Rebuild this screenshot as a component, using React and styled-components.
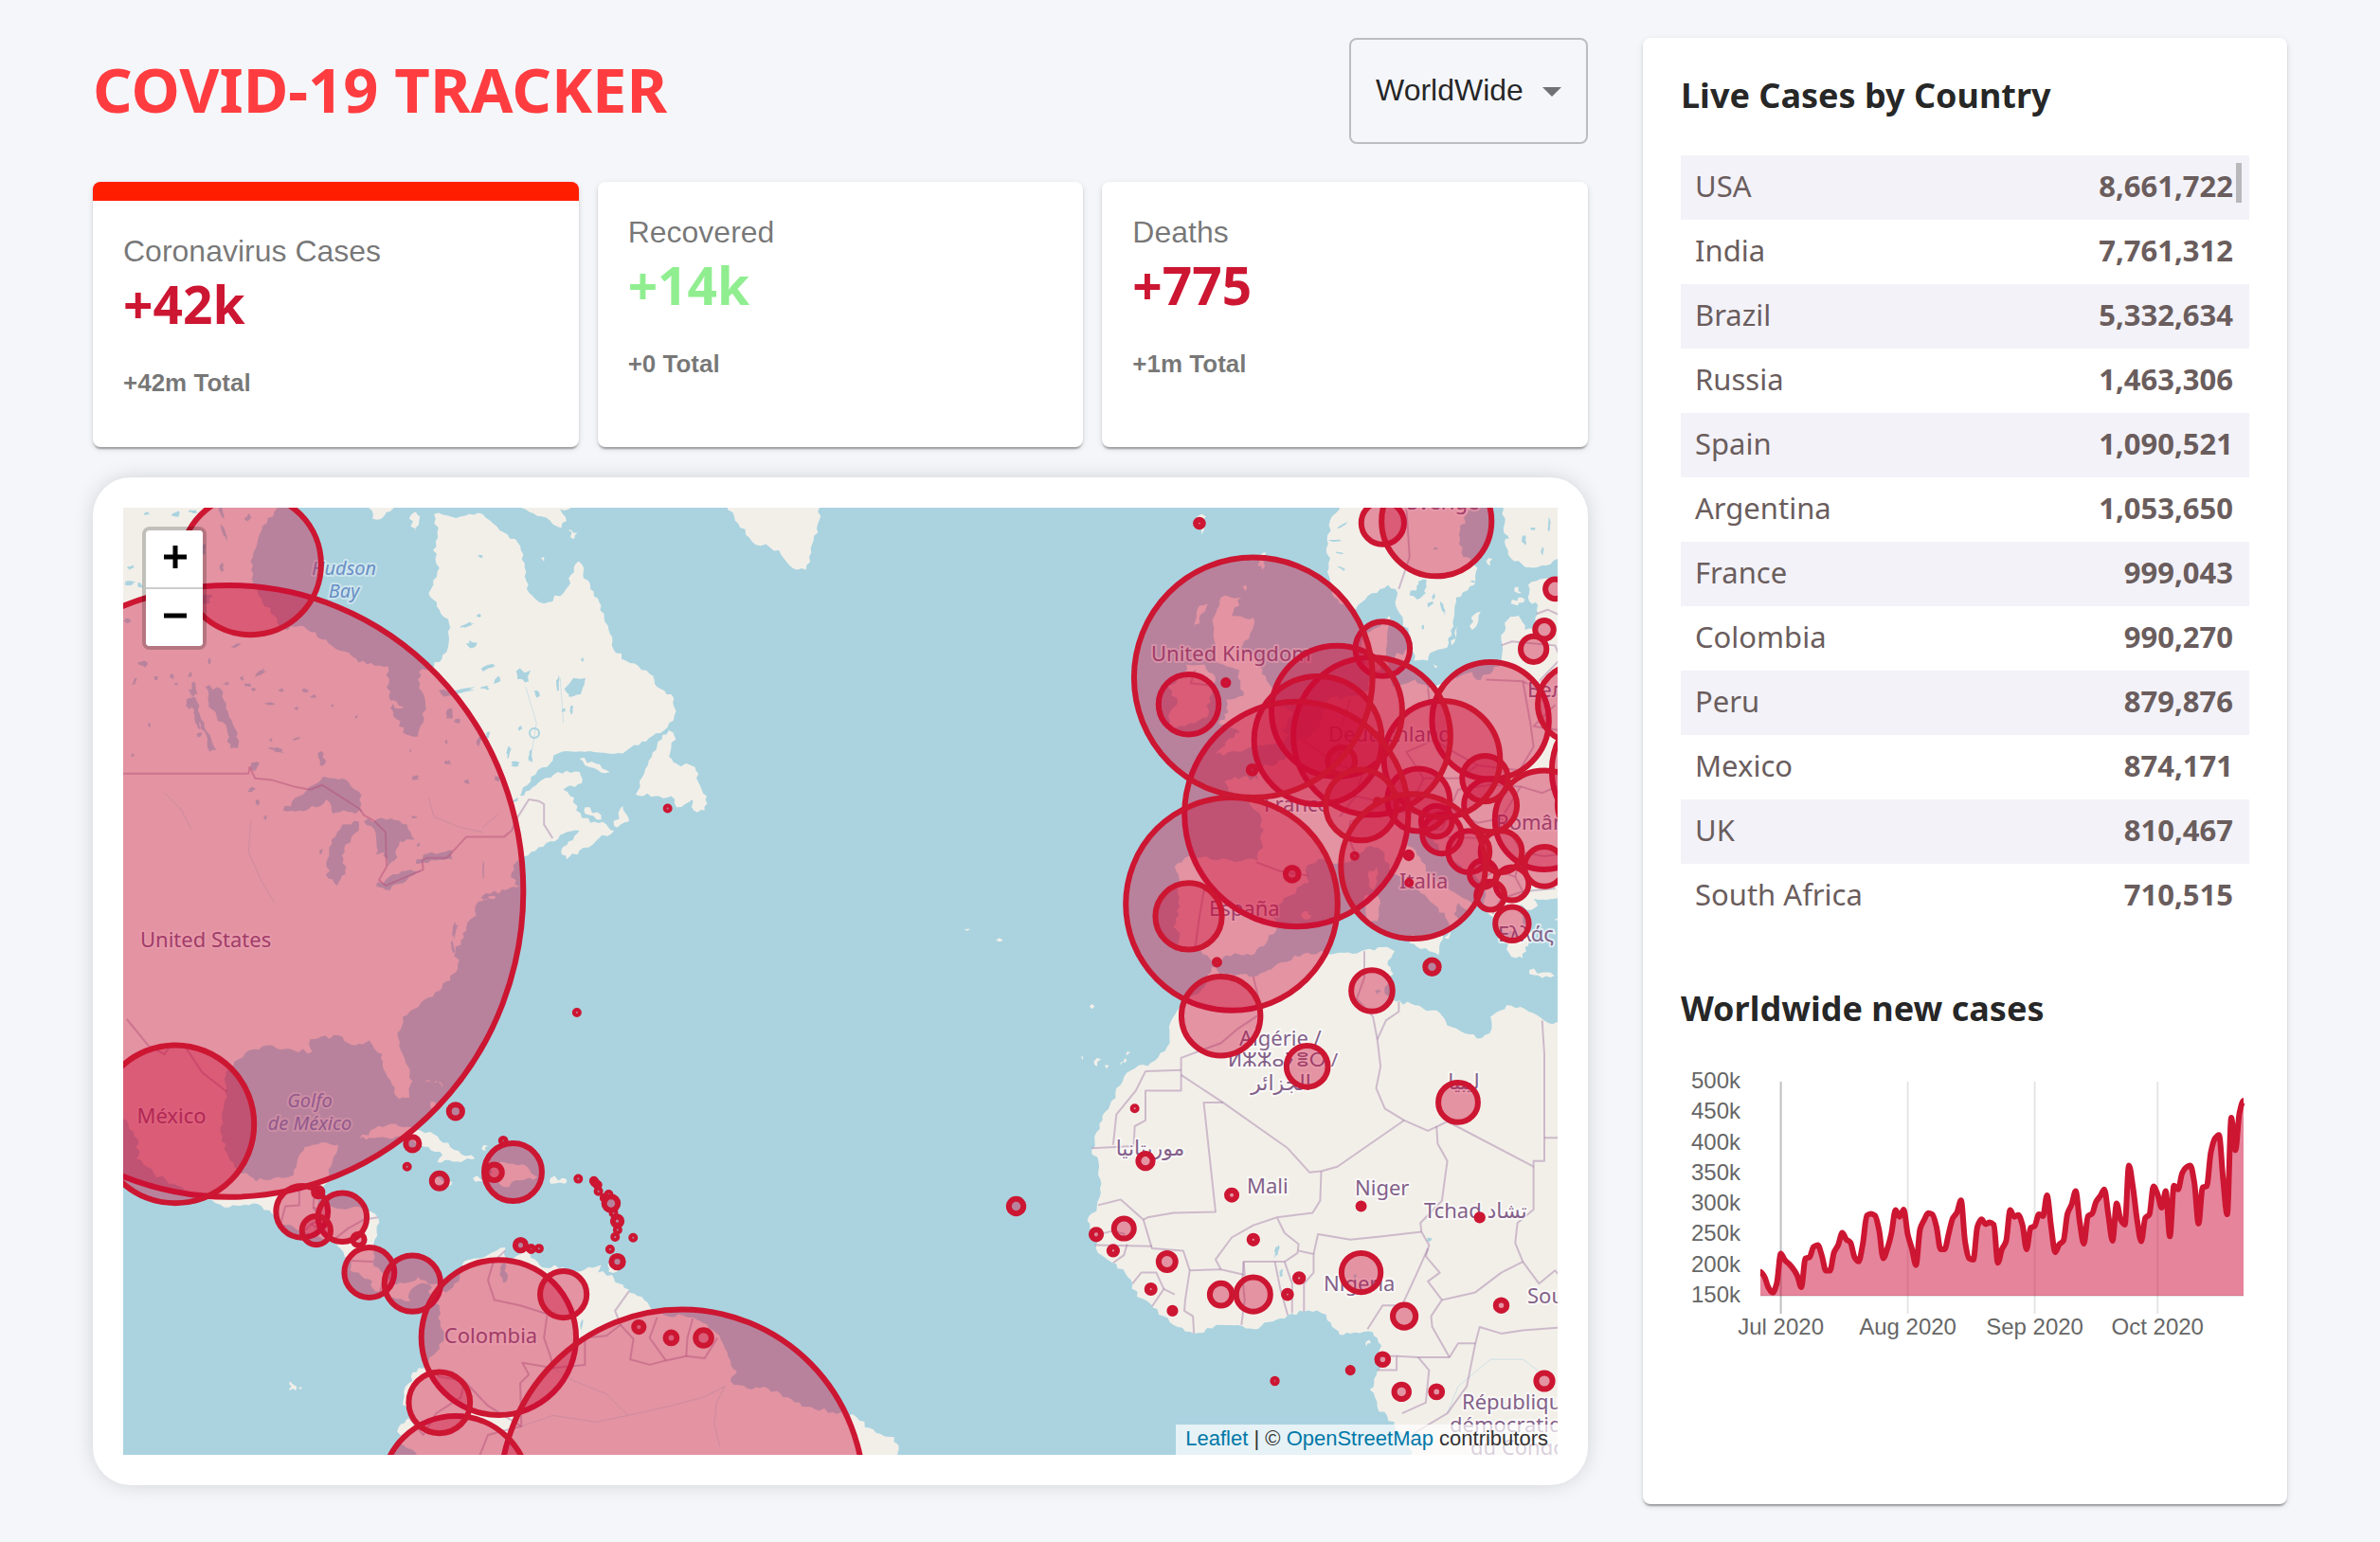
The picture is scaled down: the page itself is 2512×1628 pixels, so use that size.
import React from "react";
import styled, { createGlobalStyle, css } from "styled-components";

const ARIAL = `"Liberation Sans", Arial, sans-serif`;
const HUMANIST = `"Noto Sans", "DejaVu Sans", sans-serif`;
const CRIMSON = "#cc1632";
const CRIMSON_FILL = "#cd0a38";

const GlobalStyle = createGlobalStyle`
  * { box-sizing: border-box; }
  body { margin: 0; background: #f5f6fa; font-family: ${ARIAL}; }
`;

const paperShadow = css`
  box-shadow: 0 4px 2px -2px rgba(0, 0, 0, 0.2), 0 2px 2px rgba(0, 0, 0, 0.14),
    0 2px 6px rgba(0, 0, 0, 0.12);
`;

const Page = styled.div`
  display: grid;
  grid-template-columns: minmax(0, 1fr) 680px;
  align-items: start;
  gap: 58px;
  padding: 40px 98px;
`;
const Main = styled.main`
  display: flex;
  flex-direction: column;
`;
const Header = styled.header`
  display: flex;
  align-items: center;
  justify-content: space-between;
  margin-bottom: 40px;
`;
const Title = styled.h1`
  margin: 0;
  padding-bottom: 4px;
  font: 700 65px/80px ${HUMANIST};
  color: #ff3d40;
`;
const SelectBox = styled.label`
  position: relative;
  display: block;
`;
const CountrySelect = styled.select`
  appearance: none;
  display: block;
  width: 252px;
  height: 112px;
  padding: 0 60px 2px 26px;
  border: 2px solid rgba(0, 0, 0, 0.23);
  border-radius: 8px;
  background: transparent;
  font: 400 32px/38px ${ARIAL};
  color: rgba(0, 0, 0, 0.87);
`;
const SelectArrow = styled.svg`
  position: absolute;
  right: 14px;
  top: 32px;
  width: 48px;
  height: 48px;
  fill: rgba(0, 0, 0, 0.54);
  pointer-events: none;
`;

const Stats = styled.section`
  display: grid;
  grid-template-columns: repeat(3, minmax(0, 1fr));
  gap: 20px;
  margin-bottom: 32px;
`;
const StatCard = styled.article`
  min-height: 280px;
  padding: 32px;
  border-radius: 8px;
  background: #fff;
  color: rgba(0, 0, 0, 0.54);
  ${paperShadow}
  ${(p) => p.$active && "border-top: 20px solid #ff1e00;"}
`;
const StatLabel = styled.p`
  margin: 0;
  font-size: 32px;
  line-height: 42px;
`;
const StatValue = styled.h2`
  margin: 0 0 32px;
  font: 700 55px/70px ${HUMANIST};
  color: ${(p) => (p.$good ? "lightgreen" : CRIMSON)};
`;
const StatTotal = styled.p`
  margin: 0;
  font-size: 26px;
  font-weight: 700;
  line-height: 32px;
`;

const MapCard = styled.section`
  padding: 32px;
  border-radius: 40px;
  background: #fff;
  box-shadow: 0 0 24px -4px rgba(0, 0, 0, 0.2);
`;
const MapFrame = styled.div`
  position: relative;
  overflow: hidden;
  background: #aad3df;
`;
const MapCanvas = styled.svg`
  display: block;
  width: 100%;
  height: 1000px;
`;
const ZoomControl = styled.div`
  position: absolute;
  left: 20px;
  top: 20px;
  display: flex;
  flex-direction: column;
  border: 4px solid rgba(0, 0, 0, 0.2);
  border-radius: 8px;
  background: #ccc;
  background-clip: padding-box;
  gap: 2px;
`;
const ZoomButton = styled.button`
  display: grid;
  place-items: center;
  width: 60px;
  height: 60px;
  padding: 0 0 4px 2px;
  border: 0;
  border-radius: ${(p) => (p.$last ? "0 0 4px 4px" : "4px 4px 0 0")};
  background: #fff;
  svg { width: 24px; height: 24px; }
`;
const Attribution = styled.div`
  position: absolute;
  right: 0;
  bottom: 0;
  padding: 0 10px 2px;
  background: rgba(255, 255, 255, 0.7);
  font-size: 22px;
  line-height: 30px;
  color: #333;
  a { color: #0078a8; text-decoration: none; }
`;

const Panel = styled.aside`
  padding: 40px 40px 160px;
  border-radius: 8px;
  background: #fff;
  ${paperShadow}
`;
const PanelTitle = styled.h3`
  margin: 0 0 42px;
  font: 700 36px/42px ${HUMANIST};
  color: rgba(0, 0, 0, 0.87);
`;
const TableScroll = styled.div`
  position: relative;
  margin-bottom: 64px;
`;
const ScrollThumb = styled.span`
  position: absolute;
  top: 8px;
  right: 8px;
  width: 6px;
  height: 42px;
  background: #b9b8bb;
`;
const CasesTable = styled.table`
  width: 100%;
  border-collapse: collapse;
  font: 400 31px/36px ${HUMANIST};
  color: #6a5d5d;
  tr:nth-of-type(odd) { background: #f3f2f8; }
  th, td { padding: 14px 17px 18px 15px; text-align: left; font-weight: 400; }
  td { text-align: right; font-weight: 700; }
`;
const Chart = styled.svg`
  display: block;
  width: 100%;
  height: auto;
  overflow: visible;
  text { font: 400 24px ${ARIAL}; fill: #666; }
`;

/* ---------- map ---------- */

const RAD = Math.PI / 180;
const SCALE = 4096 / (2 * Math.PI);
const EARTH = 6371000;
const px = (lon) => 755 + (lon + 40.4796) * 11.3778;
const py = (lat) => 922 - SCALE * Math.log(Math.tan(Math.PI / 4 + (lat * RAD) / 2));
const unY = (y) => (2 * Math.atan(Math.exp((922 - y) / SCALE)) - Math.PI / 2) / RAD;

const trace = (s) =>
  s.trim().split(/\s+/).map((p, i) => {
    const [lon, lat] = p.split(",").map(Number);
    return `${i ? "L" : "M"}${px(lon).toFixed(1)} ${py(lat).toFixed(1)}`;
  }).join("");

const random = (start) => {
  let seed = start;
  return () => ((seed = (seed * 16807) % 2147483647) / 2147483647 - 0.5);
};

// Breaks every long segment into uneven steps, so that shores do not look ruled.
const shore = (s) => {
  const pts = s.trim().split(/\s+/).map((p) => p.split(",").map(Number)).map(([a, b]) => [px(a), py(b)]);
  const rnd = random(7);
  let d = "";
  pts.forEach(([x, y], i) => {
    const [u, v] = pts[(i + 1) % pts.length];
    d += `${i ? "L" : "M"}${x.toFixed(1)} ${y.toFixed(1)}`;
    const len = Math.hypot(u - x, v - y);
    const n = len > 400 ? 0 : Math.floor(len / 5);
    for (let k = 1; k <= n; k++) {
      const t = k / (n + 1);
      const o = rnd() * 5;
      d += `L${(x + (u - x) * t - ((v - y) / len) * o).toFixed(1)} ${(y + (v - y) * t + ((u - x) / len) * o).toFixed(1)}`;
    }
  });
  return d + "Z";
};

// A ragged pond: x, y, width, height and tilt in degrees.
const pond = ([x, y, w, h, tilt = 0], index) => {
  const rnd = random(index * 97 + 11);
  const a0 = tilt * RAD;
  return Array.from({ length: 11 }, (_, i) => {
    const a = (i / 11) * Math.PI * 2;
    const r = 0.5 + rnd() * 0.45;
    const ex = Math.cos(a) * w * r;
    const ey = Math.sin(a) * h * r;
    return `${i ? "L" : "M"}${(x + ex * Math.cos(a0) - ey * Math.sin(a0)).toFixed(1)} ${(y + ex * Math.sin(a0) + ey * Math.cos(a0)).toFixed(1)}`;
  }).join("") + "Z";
};

const LAND = [
  // the Americas
  "-115,66 -91,64 -92.3,62.8 -94,61.7 -94.8,60.5 -94.9,59.5 -94.3,58.7 -92.8,57.7 -92.4,57 -90.5,57.2 -88,56.5 -85,55.3 -82.3,55.1 -82.2,53.5 -81.5,52.2 -80.5,51.3 -79.5,51.2 -79,52 -78.8,53 -79.3,54.2 -79.4,54.8 -78,55.1 -77.2,55.7 -76.6,56.5 -76.6,57.3 -77.5,58 -78.5,58.8 -77.5,60 -78.1,60.8 -77.7,61.6 -78,62.4 -75.5,62.3 -73.5,62.4 -71.5,61.6 -70,61 -69.6,60 -69.4,59 -67.8,58.3 -66,58.8 -65,59.8 -64.6,60.3 -63.5,59 -62.5,58.2 -61.8,57 -61.5,56.2 -60.2,55.4 -58,54.7 -57.3,54 -56,53.6 -55.7,52.4 -57,51.4 -59,50.7 -60.5,50.2 -64,50.3 -66.5,50.2 -67.5,49.4 -69,48.8 -70,47.6 -71.2,46.8 -69.5,47.9 -68,48.6 -66.5,49.1 -64.5,49.1 -64.3,48.4 -66,48 -65,47.5 -64.8,46.7 -63.5,45.9 -62,45.8 -61.3,45.4 -63,44.7 -64.5,44.1 -65.7,43.5 -66.2,44.1 -65.5,44.7 -64.5,45.4 -66,45.2 -67.2,44.7 -69,44 -70.4,43.3 -70.8,42.6 -70.5,41.8 -70,41.7 -71.3,41.4 -73.5,41 -74,40.5 -74.1,39.6 -75,38.8 -75.5,37.8 -76,37 -75.8,36 -76.5,34.8 -77.9,33.9 -79.2,33.1 -80.9,32 -81.4,30.7 -80.9,29 -80.4,28 -80,26.8 -80.3,25.4 -81.2,25.3 -81.9,26.5 -82.7,27.8 -82.8,29 -84,30.1 -85.3,29.7 -86.5,30.4 -88.5,30.4 -89.5,30.2 -89.3,29.2 -91,29.3 -93,29.7 -94.7,29.4 -96.5,28.4 -97.3,27.3 -97.2,25.5 -97.8,22.5 -97.2,20.7 -96.2,19.2 -94.5,18.2 -92.5,18.6 -91,18.8 -90.5,20.5 -90,21.2 -88,21.6 -86.9,21.4 -87.4,20 -87.8,18.4 -88.4,17.5 -88.8,16 -87,15.8 -85,15.95 -83.2,15 -83.5,13 -83.7,11 -82.5,9.4 -81.5,8.9 -80,9.2 -79.5,9.6 -77.5,8.7 -76.9,8.2 -75.6,9.6 -75.4,10.7 -74.2,11.3 -72.2,12 -71.4,12.3 -71.4,11 -70.2,11.6 -69.8,12.1 -68.4,11 -68,10.5 -66,10.5 -64.8,10.1 -62.5,10.7 -62.8,10 -61.5,9.8 -60.8,9 -60,8.5 -58.5,7.5 -57.5,6.2 -54,5.9 -52.5,4.9 -51.5,4.2 -50.5,1.9 -49.9,0.9 -50.5,0 -48.5,-0.8 -47,-0.7 -44.5,-2 -43.5,-2.4 -41,-2.9 -40,-2.8 -38.5,-3.7 -37,-4.8 -35.3,-5.2 -34.8,-7.5 -35,-9 -80,-9 -79.5,-7 -81.2,-5.8 -81.3,-4.3 -80.3,-3.4 -80,-2.6 -80.9,-2.2 -80.8,-1 -80,0 -80,0.8 -78.8,1.5 -77.5,3 -77,4 -77.4,5.5 -77.5,7 -78.3,8 -78.4,8.9 -79.5,8.9 -80.3,8.2 -80.2,7.4 -81.5,7.6 -83,8.3 -83.7,8.6 -83.7,9.2 -85,10 -85.8,10.2 -85.7,11 -87.5,12.9 -88.5,13.2 -90.5,13.8 -92.2,14.5 -94,16 -95.2,16.1 -97,15.9 -99.5,16.7 -101.8,17.8 -104,18.9 -105.6,20.2 -105.4,21.5 -106.5,23.5 -108,25 -112,29 -115,35",
  "-53,65 -51,62.9 -49.8,62 -48.5,61.2 -46,60.8 -45,60.1 -43.5,59.9 -43,60.7 -42.5,61.8 -42,63 -41,65",
  "-73,64 -71,62.9 -69.5,62.6 -68,62.3 -66.2,61.8 -65.7,62.1 -66.3,62.6 -65.2,62.7 -64.4,63.5",
  "-65.6,61.7 -65,61.3 -64.7,61.6",
  "-84,63 -83.7,62.2 -82.9,62.2 -81.6,62.8",
  "-80.3,62.2 -79.7,61.6 -79.3,62.3 -79.7,62.5",
  "-68.3,60.5 -68.1,60.2 -67.8,60.5",
  "-82.1,53.1 -81.5,53.2 -80.8,52.9 -81.3,52.8",
  "-64.5,49.9 -63,49.6 -61.7,49.1 -62.5,49.05 -64,49.5",
  "-55.5,51.6 -56.8,51.3 -57.8,50 -58.5,49 -59.3,47.7 -57.5,47.6 -56,47.6 -55.5,46.9 -54,47.4 -53.9,46.7 -52.9,46.7 -52.7,47.6 -53.5,48.5 -53.8,49.4 -55.5,49.6 -56.2,50",
  "-61.3,45.7 -60.5,47 -59.9,46 -61,45.6",
  "-64,46.9 -62.5,46.4 -62.5,46.1 -64,46.5",
  "-74,40.6 -72.5,41 -72.2,40.9",
  "-84.9,21.9 -83.5,22.8 -82,23.2 -80,22.9 -78,22.3 -76.5,21.2 -74.2,20.2 -75.5,19.9 -77.7,19.9 -77.2,20.5 -78.5,21.2 -81.5,22.1 -84,22",
  "-78.3,18.4 -77.5,18.5 -76.3,18.1 -76.4,17.9 -77.8,17.9",
  "-74.4,18.5 -72.8,18.5 -72.6,19 -73.3,19.9 -71.5,19.9 -69.8,19.7 -68.4,18.6 -70,18.3 -71.5,17.7 -72.5,18.2 -74.2,18.2",
  "-67.2,18.5 -65.7,18.4 -65.9,18 -67.2,18",
  "-61.9,10.7 -61,10.8 -61,10.1 -61.8,10.1",
  "-78.3,25.1 -77.8,24.7 -77.8,24.1 -78.2,24.4",
  "-78.9,26.7 -77.8,26.8 -77.2,26.2 -77.4,26.7",
  "-73.6,21.1 -73,21.3 -73.2,20.9",
  "-91.4,0 -91.1,-0.3 -90.8,-0.9 -91.4,-0.9 -91.2,-0.5",
  "-90.6,-0.6 -90.2,-0.6 -90.4,-0.8",
  // the British Isles and the northern islands
  "-5.6,50.1 -3.5,50.3 -1.5,50.7 0.8,50.9 1.4,51.3 0.7,51.5 1.7,52.6 0.3,52.9 0,53.6 -1.2,54.7 -1.8,55.7 -3.2,56 -2.1,57 -2,57.6 -4,57.7 -3.1,58.6 -5,58.6 -5.8,57.5 -5.6,56.4 -5.6,55.4 -4.8,55.2 -3.3,54.9 -3.2,54.1 -2.9,53.5 -4.5,53.3 -4.3,52.6 -5.2,51.9 -3.2,51.4 -4.2,51.1",
  "-6.1,53.4 -6.3,52.3 -8.3,51.8 -10,51.6 -9.7,52.6 -9,53.2 -10,54.1 -8.5,54.5 -8.2,55.2 -6.5,55.2 -5.5,54.5",
  "-7.5,57 -6.2,58.3 -7,58.2",
  "-1.6,60.1 -1.2,59.9 -0.8,60.7 -1.3,60.6",
  "-3.3,59.1 -2.8,58.9 -2.7,59.2",
  "-7.2,62.3 -6.4,62.3 -6.8,61.5",
  // Scandinavia and Finland
  "9,65 7,63.2 5.3,62.3 4.9,61.5 5,60 5.3,59 6,58.3 7.5,58 9,58.8 10.5,59.2 11.2,59 11.2,58.2 11.9,57.4 12.8,56.3 12.9,55.4 14.2,55.4 14.4,55.8 16,56.1 16.5,57.4 16.8,58.6 18.5,59.2 18.8,60 17.3,60.7 17.2,61.7 17.8,62.4 19,63.5 20,65",
  "21.3,65 21.2,62.6 21.4,61 22.2,60.3 24,60 27,60.5 29,65",
  "18.3,57 18.2,57.6 19.1,57.9 18.8,57.3",
  "16.4,56.2 17,57.2 16.8,56.6",
  "21.9,58.3 22.6,58.6 23.2,58.5 22.5,58.2",
  "22.2,58.9 22.6,59.1 22.9,58.8",
  "19.6,60.3 20.2,60.4 20,60.1",
  "14.7,55.2 15.1,55.1 14.9,55",
  // mainland Europe
  "30,59.7 28,59.5 25,59.5 23.5,59.2 23.6,58.4 24.4,58.2 24.3,57.2 23.2,57 22.6,57.7 21.6,57.5 21,56.5 21,55.3 20,54.7 18.7,54.4 18.3,54.8 16.5,54.5 14.2,53.9 13,54.4 11,54 10.8,54.4 9.8,54.8 10.3,56 10.4,56.6 10.6,57.7 9.5,57.1 8.2,56.8 8.1,55.5 8.8,54.4 8.8,53.9 7.2,53.5 5,53.3 4.5,52.3 3.5,51.4 1.7,50.9 1.5,50.2 0.2,49.6 -1.2,49.4 -1.3,49.7 -1.9,49.7 -1.5,48.6 -3,48.8 -4.7,48.5 -4.3,47.9 -2.5,47.4 -1.2,46 -1.2,44.6 -1.6,43.4 -4,43.4 -8,43.7 -9.3,43 -8.8,41.8 -8.8,40.2 -9.4,38.8 -8.8,38.3 -8.9,37 -7.3,37.1 -6.3,36.7 -5.5,36 -4.5,36.7 -2.2,36.7 -0.8,37.6 0.2,38.8 -0.3,39.5 0.8,40.8 3.2,41.9 3,43.1 4,43.5 6.2,43.1 7.5,43.8 8.8,44.4 10.2,43.9 10.6,42.9 12.2,41.8 13.5,41.2 14.2,40.8 15.2,40.1 15.8,39.5 16.2,38.8 15.7,38 16.1,37.9 16.6,38.6 17.1,39 16.6,39.7 17,40.5 18.4,39.9 18.4,40.4 17.9,40.7 16,41.5 16.1,41.9 15.2,41.9 14,42.6 13.5,43.6 12.3,44.4 12.4,45.4 13.6,45.7 13.6,45 14.5,45.2 15.2,44.2 17,43.2 18.8,42.2 19.5,41.6 19.4,40.4 20.2,39.5 21,38.7 21.7,38.4 23,38.2 21.9,38.2 21.3,37.7 21.7,36.9 22.4,36.5 23,36.5 23.2,37.3 23.9,37.8 24,38.2 23,39 22.8,40.4 23.8,40 24.4,40.3 24,40.8 26,40.8 27,40.6 30,41",
  "11.1,55.6 12.5,56 12.2,55.2 11.3,55.2",
  "9.9,55.5 10.7,55.5 10.6,55.1 10.1,55.1",
  "12.5,38 13.5,38.1 15.6,38.2 15.2,36.7 14.3,37 12.5,37.6",
  "8.2,40.8 9.2,41.2 9.8,40.5 9.5,39.2 8.5,39",
  "8.6,42.4 9.4,43 9.5,42 9.2,41.4 8.7,41.7",
  "2.4,39.6 3.1,39.9 3.4,39.6 3,39.3",
  "23.6,35.6 24.8,35.4 26.3,35.2 24.8,35 23.6,35.3",
  "25.9,39.3 26.5,39.2 26.3,39",
  "25.9,38.5 26.1,38.3 25.9,38.2",
  // Africa
  "-5.9,35.8 -5.3,35.5 -4.5,35.2 -3,35.3 -2,35.1 0,35.9 3,36.9 6,36.9 8,37 10,37.3 11.1,37 10.5,36.3 11,35.3 10.2,34.3 10.2,33.8 11.2,33.2 13,32.9 15.3,32.3 16,31.3 18,30.6 19.2,30.3 20.1,31 20,32 21.5,32.9 23.2,32.6 25,31.7 27,31.3 30,31 30,-9 13,-9 13.3,-8 12.3,-6 11.8,-4.8 9.5,-2.4 8.8,-0.8 9.4,0.5 9.8,1.2 9.6,2.5 9.9,3.3 9.5,4 8.7,4.6 7,4.4 6,4.3 5.2,5.4 4.3,6.3 2.7,6.4 1.2,6.1 -0.2,5.5 -2,4.8 -3,5.1 -5,5.2 -7.5,4.4 -9,5 -11.3,6.8 -12.8,7.8 -13.2,9 -14.7,10.8 -16.6,12.2 -16.7,13.5 -17.4,14.7 -16.5,16 -16.1,18 -16.3,19.5 -17,21 -16,23.5 -14.8,25.8 -13.3,27.7 -11.5,28.3 -10,29.6 -9.7,31.5 -8.5,33.3 -6.8,34.1",
  "-18,28.8 -17.8,28.5 -17.8,28.8",
  "-16.8,28.4 -16.1,28.6 -16.5,28",
  "-15.8,28.1 -15.4,28.1 -15.6,27.8",
  "-14.4,28.1 -13.9,28.3 -13.9,28.7",
  "-13.8,28.9 -13.4,29.2 -13.6,29",
  "-17.2,32.8 -16.7,32.8 -17,32.6",
  "-25.9,37.8 -25.2,37.8 -25.5,37.7",
  "-28.8,38.6 -28.1,38.4 -28.6,38.5",
  "8.5,3.7 8.9,3.5 8.5,3.2",
];

const LAKES = [
  "-92,46.7 -90.5,47.6 -89.2,48.3 -88.3,48.8 -86.5,48.7 -85,47.9 -84.6,46.6 -86,46.6 -87.4,46.5 -88,47.4 -88.5,47 -90.5,46.7",
  "-87.8,42.2 -87.9,43.5 -87.5,44.8 -86.5,45.8 -85,46 -85,45.4 -86.2,44.5 -86.4,43.5 -86.2,42.5 -87,41.7",
  "-84.5,46 -82,46.2 -80.5,45.8 -79.8,44.8 -81.2,44.7 -81.7,43.4 -82.4,43 -82.6,44 -83.4,43.8 -83.4,45.2",
  "-83.4,41.7 -82.5,42.1 -81,42.7 -79,42.8 -80.5,42.1 -82.5,41.4",
  "-79.7,43.2 -79,43.8 -77,44 -76.3,44.1 -76.3,43.5 -79,43.3",
  "-99.2,54 -97.8,53.9 -97.1,52.6 -96.2,51.4 -96.2,50.5 -96.9,50.5 -97.2,51.6 -98.9,52.9",
  "-100.8,53.9 -100,53.2 -99.6,52.2 -98.8,51.3 -98.2,50.4 -98.8,50.3 -99.3,51.5 -100.3,52.5",
  "-88.8,50.2 -88.2,50.2 -88.1,49.6 -88.6,49.5",
  "-71.7,10.8 -71.3,10.6 -71.2,9.4 -71.6,9.1 -71.9,9.8",
  "12.5,58.7 13.5,59.3 14,58.8 13.2,58.5",
  "14.2,58.1 14.8,58.8 14.7,58.3",
  "9.3,34 9.9,33.9 9.5,33.7",
  "14.2,13.2 14.6,13.1 14.4,12.8",
];

const PONDS = [
  [386, 168, 18, 5, -20], [395, 182, 10, 5, -30], [382, 190, 8, 4], [358, 193, 26, 5, -8], [423, 178, 16, 13, 20], [437, 197, 10, 4, 60],
  [481, 187, 24, 14, -25], [473, 196, 8, 8], [473, 213, 4, 8], [485, 160, 3, 4], [369, 145, 12, 6, 20], [363, 124, 14, 4, -25],
  [377, 51, 6, 3], [440, 54, 5, 18, -35], [376, 114, 6, 3], [304, 70, 7, 2, -50], [419, 233, 5, 4], [414, 271, 10, 6], [407, 258, 4, 12, 10],
  [430, 262, 4, 12], [385, 240, 4, 8, 20], [395, 287, 6, 4], [459, 185, 3, 14], [465, 214, 4, 4], [340, 196, 16, 6],
  [345, 218, 8, 10], [353, 225, 8, 4], [376, 246, 4, 14, 30], [308, 285, 8, 4], [363, 289, 6, 5], [396, 286, 8, 5], [343, 269, 6, 4],
  [341, 247, 3, 4], [307, 327, 7, 3], [312, 356, 4, 3], [22, 165, 12, 6, 20], [4, 119, 8, 5, -20], [12, 184, 3, 8, 20], [35, 180, 4, 4],
  [52, 178, 5, 6], [71, 176, 4, 5], [56, 186, 4, 3], [91, 162, 4, 6], [109, 186, 6, 3], [75, 192, 6, 14], [70, 207, 8, 12, 30],
  [78, 225, 5, 16, -10], [81, 240, 5, 6], [145, 174, 11, 5, -30], [125, 180, 5, 5], [132, 187, 8, 3], [138, 192, 6, 3], [167, 193, 5, 3],
  [192, 193, 8, 3, 15], [156, 207, 12, 3], [183, 212, 5, 3], [201, 199, 6, 3], [221, 209, 3, 3], [246, 221, 3, 3], [28, 229, 3, 4],
  [156, 245, 3, 3], [163, 256, 14, 4, 15], [183, 244, 10, 2, -15], [10, 261, 4, 3], [139, 274, 8, 10], [136, 297, 8, 4, -20],
  [142, 311, 5, 6, 20], [150, 327, 4, 4], [209, 363, 3, 6], [88, 95, 10, 12, 20], [104, 5, 4, 12, -10], [107, 27, 4, 16, -20],
  [132, 11, 6, 8, 30], [104, 63, 4, 8], [85, 45, 4, 14], [120, 145, 12, 3, -25], [56, 7, 10, 6], [74, 4, 8, 3], [8, 63, 8, 4, -20],
  [6, 80, 12, 4], [18, 82, 5, 6, -30], [25, 6, 6, 3], [303, 257, 2, 3], [380, 382, 2, 18], [350, 446, 4, 16, 10], [348, 464, 3, 14, -10],
  [1479, 34, 4, 12], [1488, 22, 6, 3], [1505, 20, 3, 14], [1498, 46, 3, 8], [1461, 31, 3, 4], [1280, 35, 14, 2], [1284, 48, 10, 2, 10],
  [1288, 18, 12, 2, -30], [1286, 64, 8, 2, 30], [1385, 43, 6, 3], [1372, 80, 10, 14], [1370, 90, 8, 6], [1393, 106, 3, 12, -20],
  [1425, 78, 8, 2], [1372, 126, 3, 4], [484, 862, 3, 10, 10], [1218, 784, 4, 14, 20], [1222, 808, 4, 8], [1300, 813, 3, 8],
  [330, 160, 6, 3], [322, 148, 4, 4],
];

const BORDERS = [
  "-107,49 -95.2,49 -95.1,49.4 -94.6,48.7 -93,48.6 -91,48.2 -89.5,48 -88.4,48.3 -84.9,46.8 -84.5,46.4 -83.5,46 -82.5,45.3 -82.4,43 -83.1,42.1 -82.5,41.7 -79,42.8 -79.1,43.4 -78.7,43.6 -76.8,43.6 -75,45 -71.5,45 -70.8,45.4 -70.3,46.2 -69.2,47.4 -68.3,47.3 -67.8,47.1 -67.8,45.8 -67,44.9",
  "-106.5,31.8 -104.5,29.7 -103,29 -102.3,29.9 -101,29.5 -99.5,27.5 -97.2,25.9",
  "-92.2,14.5 -91.8,16 -90.5,16.1 -90.5,17.8 -89.1,17.8 -89.2,15.9 -88.4,15.6",
  "-89.2,15.9 -88.5,14.8 -89.4,14.4 -90,13.8", "-89.4,14.4 -87.8,13.4", "-87.3,13 -86,14 -84.5,14.8 -83.2,15",
  "-85.7,11.1 -83.7,11", "-83,8.3 -82.6,9.5", "-77.9,7.2 -77.4,8.6",
  "-71.4,12 -72.5,11 -73,9.3 -72.4,7.5 -70,7 -67.5,6.2 -67.8,4 -67.2,2.3 -67,1.2 -69.8,1.7 -69.2,0.6 -70,-0.2 -69.9,-4.2 -73,-2.3 -75.2,0 -77.5,0.4 -78.8,1.4",
  "-67,1.2 -64,1.5 -64,4 -62,4.2 -60.7,5.2 -61.2,6.5 -59.9,8.3",
  "-60.7,5.2 -59.5,3.9 -59.8,2 -58,1.5 -56.5,1.9 -54.6,2.3 -52.9,2.1 -51.7,4",
  "-57.3,5.9 -58,4 -56.5,1.9", "-54,5.8 -54.5,4 -54.6,2.3",
  "-80.3,-3.4 -79,-5 -77.8,-3 -75.5,-1.5 -75.2,0", "-69.9,-4.2 -73,-5 -74,-7.5 -73,-9",
  "-2,35.1 -1.2,32.3 -3.5,31 -5,29.9 -8.7,28.7 -8.7,26 -12,26 -12,23.5 -13,23 -13.1,21.3 -17,21.1",
  "-8.7,27.7 -12,27.6 -12.9,26 -14.7,24 -15,21.4",
  "-8.7,27.3 -4.8,25 1.2,21.1 3.2,19 4.3,19.1 5.8,19.5 12,23.5",
  "-4.8,25 -6.6,25 -5.5,15.5 -9.4,15.4 -11.8,15 -12.2,14.8", "-16.4,16.1 -14.3,16.6 -12.2,14.8",
  "8.3,37 8.3,35 7.6,33.4 9.1,32 9.5,30.2 9.8,28 9.4,26.2 10.2,24.5 12,23.5",
  "9.5,30.2 10.3,31.7 11.5,32.4 11.5,33.2",
  "12,23.5 14.2,22.6 16,23.4 24,19.5 24,20 25,20 25,29 24.8,31.7", "25,22 30,22",
  "15,23 15.1,21.5 16,20 15.5,16.5 13.5,14.5 13.6,13.7 14.3,12.5 14,11.5 15.3,10 14.2,9.2 15.5,7.5 14.5,6 14.6,5 16.2,2.2",
  "3.6,11.7 4,13.5 7,13 10,13.3 13.6,13.7",
  "4.3,19.1 4.2,16.5 3.5,15.4 0.2,15 0.9,13.6 2.2,12.6 2.1,11.8 0.9,11 -2.9,11 -2.8,9.8 -5,10.3 -5.5,11.2 -4,13.2 -2,14.3 0.2,15",
  "24,19.5 24,15.7 22.5,14.5 22.3,12.7 23,11 21,10 18.6,8.2 15.5,7.5", "23,11 24.5,9 26,10.2 27,9",
  "8.6,4.8 10,7 11.8,7 13.2,10 14.2,12.2",
  "9.8,2.3 11.3,2.3 11.3,1 9.5,1", "11.3,2.3 13.3,2.2 16.2,2.2 17,3.5 18.6,3.5 19,5 21,4.4 23,4.7 27,5",
  "18.6,3.5 17.8,-0.5 16,-3 13,-4.8 12.4,-5.8", "13.3,2.2 14.3,1 14,-2 11.8,-3",
  "-2.9,11 -3,9.5 -2.8,7.5 -3.1,5.2", "0,11 0.5,8.5 1.2,6.1", "0.9,11 1.6,9 1.6,6.3", "2.2,12 3.6,11.7 3.6,10 2.7,9 2.7,6.4",
  "-7.5,4.4 -7.6,6 -8.4,6.5 -8.3,7.6 -7.9,10.2 -5,10.3", "-11.4,6.9 -10.3,8.5 -9.3,8", "-13.2,9 -12.4,10 -11,10 -10.3,8.5",
  "-7.9,10.2 -8.5,12 -11.4,12.2 -12.2,14.8", "-11.4,12.4 -16.7,12.5", "-13.7,12.6 -14,11.6 -15,10.9", "-16.6,13.4 -15,13.8 -13.9,13.5",
  "-8.8,41.9 -6.5,41.7 -7,39.5 -7.4,37.2", "-1.7,43.3 0.5,42.7 3.1,42.4",
  "7.5,43.8 6.8,45 7,46 10.5,46.7 13.7,46.5 16.2,46.8 17,48 20,48.3 22.8,48.2 21,46.2 18.8,45.9 16.2,46.8",
  "6,46.3 7.5,47.6 8.1,49 6,49.5 2.5,51", "6,49.5 6,51.5 7,53.3", "7.5,47.6 9.6,47.3 13,47.6 13.8,48.7",
  "14.2,53.9 14.8,51 12.2,50.3 13.8,48.7 17,48.7 18.8,49.5 16,50.5 14.8,51",
  "19.6,54.4 23,54.3 23.7,52 24,50.6 22.7,49.2 18.8,49.5", "22.8,48.2 24.8,47.8 26.6,48.3",
  "21,46.2 22.5,44.5 22.8,44 25,43.7 28,44", "19,42 20.5,42.8 22.3,42.3 23,41.3 26,41.5", "20.2,39.7 21,40.8 23,41.3", "22.8,44 22.3,42.3",
  "16,45 19,44.9 19.3,43.5 18.5,42.5", "19.5,41.8 20.5,42.1 20.6,41", "13.7,46.5 13.6,45.6", "16.2,46.5 15.5,45.5 13.7,45.4",
  "12,64 12.3,62 12.5,60.5 11.5,59", "24.3,57.8 25.3,58 27,57.6", "21,56.2 22,56.4 26,56.2 26.5,55.5 24,54 23,54.3", "26,53 24,51.8 27,51.5",
  "-7.4,54.9 -7.8,54.2 -6.2,54.1", "8.7,54.9 9.9,54.8",
];

const RIVERS = [
  "-103,47.8 -101.5,46.8 -100.5,45.5", "-95,46 -95.2,44 -94,42 -92.8,40.5", "-78.5,47.5 -78,46.3 -75.5,45.6 -73.5,45.3", "-72,46.5 -73.5,45.6",
  "-69.9,-4.2 -67,-3.2 -63,-3.8 -60,-3.2 -56,-2.3 -53,-1.5 -51,-0.5", "-67,1.2 -65,0 -62,-1.2 -60,-3.2",
  "-51,-0.5 -51.8,-2 -52,-4 -51.5,-6", "16,-3 17,-0.5 20,2 23,2 25,0.5", "-69,50 -68.5,52 -69.5,54", "-66,52 -66.3,54.5",
];

// lat, lon, cases
const CASES = [
  [38, -97, 8661722], [60, -95, 205000], [23, -102, 874171], [15.5, -90.25, 103902], [17.25, -88.75, 2900],
  [15, -86.5, 92200], [13.83, -88.92, 32200], [13, -85, 5353], [10, -84, 101000], [9, -80, 127866],
  [4, -72, 990270], [8, -66, 88416], [-10, -55, 5332634], [-10, -76, 879876], [-2, -77.5, 156451],
  [5, -59, 3877], [4, -56, 5158], [4, -53, 10268], [11, -61, 5431], [12.5, -69.97, 4400],
  [12.17, -68.99, 848], [12.2, -68.26, 150], [12.12, -61.67, 27], [13.17, -59.53, 230], [13.25, -61.2, 70],
  [13.88, -60.97, 50], [14.67, -61, 3000], [15.4, -61.35, 38], [16.25, -61.58, 7329], [16.75, -62.2, 13],
  [17.05, -61.8, 122], [17.33, -62.75, 19], [17.9, -62.83, 80], [18.08, -63.05, 540], [18.25, -63.17, 3],
  [18.43, -64.62, 71], [19, -70.67, 123873], [19, -72.42, 9026], [21.75, -71.58, 698], [24.25, -76, 6268],
  [21.5, -80, 6421], [19.5, -80.5, 239], [18.25, -77.5, 8600], [32.33, -64.75, 190], [46.83, -56.33, 16],
  [16, -24, 8198], [62, -7, 490], [62, 10, 16772], [62, 15, 110594], [59, 26, 4200],
  [57, 25, 4208], [56, 24, 8663], [56, 10, 38622], [52, 20, 214686], [53, 28, 91167],
  [49, 32, 330396], [46, 25, 196004], [47, 29, 69568], [43, 25, 34930], [39, 22, 28216],
  [41.83, 22, 25473], [41, 20, 18858], [42.5, 19.3, 16200], [44, 21, 36900], [44, 18, 37000],
  [45.17, 15.5, 31717], [46, 15, 19307], [47.33, 13.33, 74415], [47, 20, 54278], [48.67, 19.5, 37911],
  [49.75, 15.5, 234000], [51, 9, 405000], [52.5, 5.75, 262405], [50.83, 4, 270132], [49.75, 6.17, 12900],
  [46, 2, 999043], [47, 8, 97019], [47.27, 9.53, 280], [43.73, 7.4, 277], [43.77, 12.42, 766],
  [41.9, 12.45, 27], [42.83, 12.83, 465726], [42.5, 1.6, 3811], [40, -4, 1090521], [39.5, -8, 109541],
  [36.18, -5.37, 622], [53, -8, 54476], [54.23, -4.55, 350], [49.22, -2.1, 980], [54, -2, 810467],
  [35.83, 14.58, 5137], [34, 9, 48799], [28, 3, 55630], [32, -5, 186731], [25, 17, 53620],
  [24.5, -13, 10], [20, -12, 7638], [17, -4, 3440], [16, 8, 1212], [15, 19, 1400],
  [14, -14, 15508], [13.47, -16.57, 3655], [12, -15, 2403], [11, -10, 11518], [8.5, -11.5, 2340],
  [6.5, -9.5, 1390], [8, -5, 20390], [8, -2, 47601], [8, 1.17, 2133], [9.5, 2.25, 2496],
  [13, -2, 2433], [10, 8, 61882], [6, 12, 21570], [2, 10, 5074], [1, 7, 935],
  [-1, 11.75, 8881], [-1, 15, 5156], [0, 25, 11066], [7, 21, 4858], [0, 0, 712],
];

// Ground circle around a country, its radius growing with the root of the case count.
const caseEllipse = ([lat, lon, cases]) => {
  const latR = (Math.sqrt(cases) * 800) / EARTH / RAD;
  const top = py(lat + latR);
  const cy = (top + py(lat - latR)) / 2;
  const mid = unY(cy);
  const lonR =
    Math.acos(
      (Math.cos(latR * RAD) - Math.sin(lat * RAD) * Math.sin(mid * RAD)) /
        (Math.cos(lat * RAD) * Math.cos(mid * RAD))
    ) / RAD;
  return { cx: px(lon), cy, rx: Math.max(lonR * 11.3778, 2), ry: Math.max(cy - top, 2) };
};

const WATER_LABEL = "#6a8fc6";
const LABELS = [
  { x: 233, y: 71, t: "Hudson", anchor: "middle", water: true }, { x: 233, y: 95, t: "Bay", anchor: "middle", water: true },
  { x: 197, y: 633, t: "Golfo", anchor: "middle", water: true }, { x: 197, y: 657, t: "de México", anchor: "middle", water: true },
  { x: 18, y: 464, t: "United States" }, { x: 51, y: 650, t: "México", anchor: "middle" },
  { x: 388, y: 882, t: "Colombia", anchor: "middle" }, { x: 1085, y: 162, t: "United Kingdom" },
  { x: 1272, y: 247, t: "Deutschland" }, { x: 1204, y: 321, t: "France" }, { x: 1146, y: 431, t: "España" },
  { x: 1347, y: 402, t: "Italia" }, { x: 1449, y: 340, t: "România" }, { x: 1451, y: 458, t: "Ελλάς" },
  { x: 1355, y: 2, t: "Sverige" }, { x: 1482, y: 200, t: "Беларусь" }, { x: 1178, y: 568, t: "Algérie /" },
  { x: 1166, y: 590, t: "ⵍⵣⵣⴰⵢⴻⵔ /", small: true }, { x: 1222, y: 615, t: "الجزائر", anchor: "middle" },
  { x: 1415, y: 614, t: "ليبيا", anchor: "middle" }, { x: 1084, y: 684, t: "موريتانيا", anchor: "middle" },
  { x: 1186, y: 724, t: "Mali" }, { x: 1300, y: 726, t: "Niger" }, { x: 1373, y: 750, t: "Tchad تشاد" },
  { x: 1267, y: 827, t: "Nigeria" }, { x: 1482, y: 840, t: "South Sudan" }, { x: 1413, y: 952, t: "République" },
  { x: 1400, y: 976, t: "démocratique" }, { x: 1422, y: 1000, t: "du Congo" },
];

const WorldMap = () => (
  <MapCanvas viewBox="0 0 1514 1000" preserveAspectRatio="xMidYMid slice" role="img" aria-label="Cases by country">
    <rect x="-2000" y="-1000" width="5514" height="3000" fill="#aad3df" />
    <g fill="#f2efe9" strokeLinejoin="round">{LAND.map((s) => <path key={s} d={shore(s)} />)}</g>
    <g fill="#aad3df">
      {LAKES.map((s) => <path key={s} d={shore(s)} />)}
      {PONDS.map((p, i) => <path key={p.join()} d={pond(p, i)} />)}
    </g>
    <circle cx="434" cy="238" r="5" fill="none" stroke="#aad3df" strokeWidth="2" />
    <g fill="none" stroke="#aad3df" strokeOpacity="0.5">{RIVERS.map((s) => <path key={s} d={trace(s)} />)}</g>
    <g fill="none" stroke="#a07ba5" strokeOpacity="0.45" strokeWidth="2" strokeLinejoin="round">
      {BORDERS.map((s) => <path key={s} d={trace(s)} />)}
    </g>
    <g fontFamily={HUMANIST} paintOrder="stroke" strokeWidth="4" strokeLinejoin="round">
      {LABELS.map((l) => (
        <text
          key={l.t}
          x={l.x}
          y={l.y}
          textAnchor={l.anchor}
          fontSize={l.water || l.small ? 20 : 22}
          fontStyle={l.water ? "italic" : undefined}
          fill={l.water ? WATER_LABEL : "#83618a"}
          stroke={l.water ? "rgba(255,255,255,0.4)" : "rgba(255,255,255,0.6)"}
        >
          {l.t}
        </text>
      ))}
    </g>
    <g fill={CRIMSON_FILL} fillOpacity="0.4" stroke={CRIMSON} strokeWidth="6">
      {CASES.map((c) => <ellipse key={c.join()} {...caseEllipse(c)} />)}
    </g>
  </MapCanvas>
);

/* ---------- chart ---------- */

const DAILY = [
  189, 181, 163, 155, 170, 219, 208, 202, 194, 183, 164, 211, 213, 230, 233, 216, 191, 191, 221, 233, 253, 242, 237, 213,
  206, 234, 281, 284, 281, 257, 211, 227, 252, 290, 279, 291, 250, 227, 200, 259, 274, 285, 283, 263, 226, 226, 252, 277,
  286, 306, 238, 211, 209, 263, 275, 267, 270, 266, 204, 226, 239, 290, 279, 282, 266, 226, 261, 264, 283, 280, 314, 263,
  221, 234, 240, 284, 299, 321, 270, 235, 280, 284, 304, 313, 324, 281, 240, 301, 274, 266, 363, 327, 274, 239, 277, 283,
  329, 316, 294, 321, 247, 330, 324, 350, 360, 363, 334, 268, 327, 329, 384, 407, 413, 341, 283, 441, 388, 449, 469,
];
const PLOT = { left: 84, right: 594, top: 14, bottom: 240 };
const STEP = (PLOT.right - PLOT.left) / (DAILY.length - 1);
const chartX = (day) => PLOT.left + day * STEP;
const chartY = (v) => PLOT.bottom - ((v - 150) / 350) * (PLOT.bottom - PLOT.top);

const curve = (() => {
  const y = DAILY.map(chartY);
  const slope = y.map((v, i) => {
    const a = v - y[i - 1];
    const b = y[i + 1] - v;
    return a * b > 0 ? (2 * a * b) / (a + b) : 0;
  });
  return y.reduce(
    (d, v, i) =>
      i === 0
        ? `M${chartX(0)} ${v}`
        : `${d}C${chartX(i - 1) + STEP / 3} ${y[i - 1] + slope[i - 1] / 3} ${chartX(i) - STEP / 3} ${v - slope[i] / 3} ${chartX(i)} ${v}`,
    ""
  );
})();

const MONTHS = [["Jul 2020", 5], ["Aug 2020", 36], ["Sep 2020", 67], ["Oct 2020", 97]];
const TICKS = [500, 450, 400, 350, 300, 250, 200, 150];

const LineChart = () => (
  <Chart viewBox="0 0 600 300" role="img" aria-label="Worldwide new cases per day">
    <line x1={PLOT.left} x2={PLOT.right} y1={PLOT.bottom} y2={PLOT.bottom} stroke="rgba(0,0,0,0.1)" strokeWidth="2" />
    {MONTHS.map(([m, day], i) => (
      <g key={m}>
        <line x1={chartX(day)} x2={chartX(day)} y1={PLOT.top} y2="259" stroke={i ? "rgba(0,0,0,0.1)" : "rgba(0,0,0,0.25)"} strokeWidth="2" />
        <text x={chartX(day)} y="281" textAnchor="middle">{m}</text>
      </g>
    ))}
    {TICKS.map((v) => (
      <text key={v} x="63" y={chartY(v) + 7} textAnchor="end">{v}k</text>
    ))}
    <path d={`${curve}V${PLOT.bottom}H${PLOT.left}Z`} fill={CRIMSON_FILL} fillOpacity="0.5" />
    <path d={curve} fill="none" stroke={CRIMSON} strokeWidth="6" strokeLinejoin="round" />
  </Chart>
);

/* ---------- page ---------- */

const STATS = [
  { label: "Coronavirus Cases", value: "+42k", total: "+42m Total", active: true },
  { label: "Recovered", value: "+14k", total: "+0 Total", good: true },
  { label: "Deaths", value: "+775", total: "+1m Total" },
];
const COUNTRIES = [
  ["USA", 8661722], ["India", 7761312], ["Brazil", 5332634], ["Russia", 1463306], ["Spain", 1090521],
  ["Argentina", 1053650], ["France", 999043], ["Colombia", 990270], ["Peru", 879876], ["Mexico", 874171],
  ["UK", 810467], ["South Africa", 710515],
];

export default function App() {
  return (
    <>
      <GlobalStyle />
      <Page>
        <Main>
          <Header>
            <Title>COVID-19 TRACKER</Title>
            <SelectBox>
              <CountrySelect aria-label="Country" defaultValue="worldwide">
                <option value="worldwide">WorldWide</option>
                {COUNTRIES.map(([name]) => <option key={name}>{name}</option>)}
              </CountrySelect>
              <SelectArrow viewBox="0 0 24 24" aria-hidden="true"><path d="M7 10l5 5 5-5z" /></SelectArrow>
            </SelectBox>
          </Header>
          <Stats>
            {STATS.map((s) => (
              <StatCard key={s.label} $active={s.active}>
                <StatLabel>{s.label}</StatLabel>
                <StatValue $good={s.good}>{s.value}</StatValue>
                <StatTotal>{s.total}</StatTotal>
              </StatCard>
            ))}
          </Stats>
          <MapCard>
            <MapFrame>
              <WorldMap />
              <ZoomControl>
                <ZoomButton type="button" aria-label="Zoom in">
                  <svg viewBox="0 0 24 24"><path d="M12 0v24M0 12h24" stroke="#000" strokeWidth="5" /></svg>
                </ZoomButton>
                <ZoomButton type="button" aria-label="Zoom out" $last>
                  <svg viewBox="0 0 24 24"><path d="M0 12h24" stroke="#000" strokeWidth="5" /></svg>
                </ZoomButton>
              </ZoomControl>
              <Attribution>
                <a href="#leaflet">Leaflet</a> | © <a href="#openstreetmap">OpenStreetMap</a> contributors
              </Attribution>
            </MapFrame>
          </MapCard>
        </Main>
        <Panel>
          <PanelTitle>Live Cases by Country</PanelTitle>
          <TableScroll>
            <CasesTable>
              <tbody>
                {COUNTRIES.map(([name, cases]) => (
                  <tr key={name}>
                    <th scope="row">{name}</th>
                    <td>{cases.toLocaleString("en-US")}</td>
                  </tr>
                ))}
              </tbody>
            </CasesTable>
            <ScrollThumb />
          </TableScroll>
          <PanelTitle>Worldwide new cases</PanelTitle>
          <LineChart />
        </Panel>
      </Page>
    </>
  );
}
